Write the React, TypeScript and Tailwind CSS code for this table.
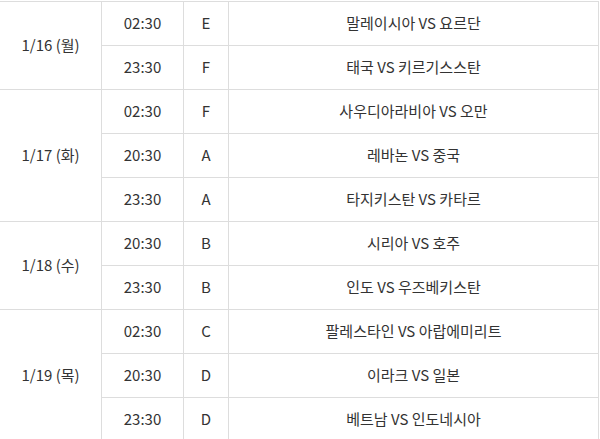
const schedule = [
  {
    date: '1/16 (월)',
    games: [
      { time: '02:30', group: 'E', match: '말레이시아 VS 요르단' },
      { time: '23:30', group: 'F', match: '태국 VS 키르기스스탄' },
    ],
  },
  {
    date: '1/17 (화)',
    games: [
      { time: '02:30', group: 'F', match: '사우디아라비아 VS 오만' },
      { time: '20:30', group: 'A', match: '레바논 VS 중국' },
      { time: '23:30', group: 'A', match: '타지키스탄 VS 카타르' },
    ],
  },
  {
    date: '1/18 (수)',
    games: [
      { time: '20:30', group: 'B', match: '시리아 VS 호주' },
      { time: '23:30', group: 'B', match: '인도 VS 우즈베키스탄' },
    ],
  },
  {
    date: '1/19 (목)',
    games: [
      { time: '02:30', group: 'C', match: '팔레스타인 VS 아랍에미리트' },
      { time: '20:30', group: 'D', match: '이라크 VS 일본' },
      { time: '23:30', group: 'D', match: '베트남 VS 인도네시아' },
    ],
  },
];

const cell = 'border border-[#dddddd] text-center align-middle';

export default function App() {
  return (
    <div className="w-[600px] h-[439px] overflow-hidden bg-white">
      <table
        className="mt-px -ml-px w-[600px] table-fixed border-collapse text-[15px] text-[#333333]"
        style={{ fontFamily: '"Noto Sans CJK KR", "Noto Sans", sans-serif' }}
      >
        <colgroup>
          <col className="w-[102px]" />
          <col className="w-[82px]" />
          <col className="w-[45px]" />
          <col />
        </colgroup>
        <tbody>
          {schedule.map((day) =>
            day.games.map((g, i) => (
              <tr key={day.date + g.time} className="h-[44px]">
                {i === 0 && (
                  <td rowSpan={day.games.length} className={cell}>
                    {day.date}
                  </td>
                )}
                <td className={cell}>{g.time}</td>
                <td className={cell}>{g.group}</td>
                <td className={cell}>{g.match}</td>
              </tr>
            ))
          )}
        </tbody>
      </table>
    </div>
  );
}
